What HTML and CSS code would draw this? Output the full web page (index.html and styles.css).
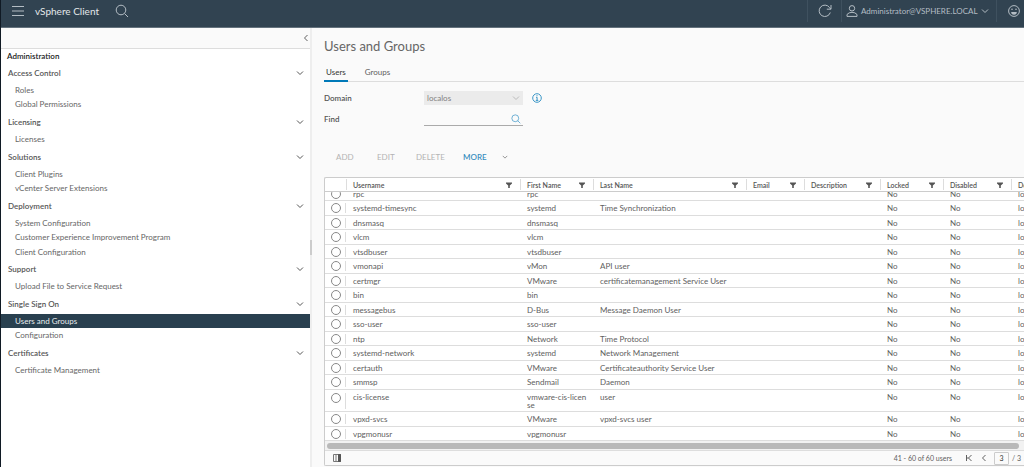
FILE: index.html
```html
<!DOCTYPE html>
<html lang="en">
<head>
<meta charset="utf-8">
<title>vSphere Client</title>
<link rel="stylesheet" href="styles.css">
</head>
<body>
<svg class="symbols" aria-hidden="true">
  <symbol id="chevron" viewBox="0 0 8 8"><path d="M1 2.500 4 5.500 7 2.500"/></symbol>
  <symbol id="chevron-left" viewBox="0 0 8 8"><path d="M5.500 1 2.500 4 5.500 7"/></symbol>
  <symbol id="search" viewBox="0 0 14 14"><circle cx="6" cy="6" r="4.800"/><path d="M9.500 9.500 13 13"/></symbol>
  <symbol id="filter" viewBox="0 0 6 6"><path d="M0 .5h6v1L3.800 3.500V6H2.200V3.500L0 1.500z"/></symbol>
</svg>
<header class="topbar">
  <button class="icon-button menu" aria-label="Menu"><svg class="icon" viewBox="0 0 12 12"><path d="M0 1.500h12M0 6h12M0 10.500h12"/></svg></button>
  <span class="brand">vSphere Client</span>
  <button class="icon-button" aria-label="Search"><svg class="icon icon-large"><use href="#search"/></svg></button>
  <div class="topbar-right">
    <button class="icon-button refresh" aria-label="Refresh"><svg class="icon icon-large" viewBox="0 0 14 14"><path d="M12.300 8.500A5.700 5.700 0 1 1 11.500 3.500L12.700 5M13 1v4.200H8.800"/></svg></button>
    <button class="account"><svg class="icon" viewBox="0 0 12 12"><circle cx="6" cy="3.300" r="2.700"/><path d="M1 11.400V9.500Q2.800 7.300 6 7.300T11 9.500v1.900z"/></svg><span>Administrator@VSPHERE.LOCAL</span><svg class="icon icon-small"><use href="#chevron"/></svg></button>
    <button class="icon-button smiley" aria-label="Feedback"><svg class="icon" viewBox="0 0 12 12"><circle cx="6" cy="6" r="5.400"/><path class="solid" d="M3.200 7h5.600A2.800 2.800 0 0 1 3.200 7z"/><circle class="solid" cx="4" cy="4.300" r=".8"/><circle class="solid" cx="8" cy="4.300" r=".8"/></svg></button>
  </div>
</header>
<div class="layout">
  <aside class="sidebar">
    <div class="sidebar-bar"><button class="icon-button" aria-label="Collapse"><svg class="icon icon-small"><use href="#chevron-left"/></svg></button></div>
    <nav class="nav">
      <h2 class="nav-title">Administration</h2>
      <button class="group">Access Control<svg class="icon icon-small"><use href="#chevron"/></svg></button>
      <ul><li><a href="#">Roles</a></li><li><a href="#">Global Permissions</a></li></ul>
      <button class="group">Licensing<svg class="icon icon-small"><use href="#chevron"/></svg></button>
      <ul><li><a href="#">Licenses</a></li></ul>
      <button class="group">Solutions<svg class="icon icon-small"><use href="#chevron"/></svg></button>
      <ul><li><a href="#">Client Plugins</a></li><li><a href="#">vCenter Server Extensions</a></li></ul>
      <button class="group">Deployment<svg class="icon icon-small"><use href="#chevron"/></svg></button>
      <ul><li><a href="#">System Configuration</a></li><li><a href="#">Customer Experience Improvement Program</a></li><li><a href="#">Client Configuration</a></li></ul>
      <button class="group">Support<svg class="icon icon-small"><use href="#chevron"/></svg></button>
      <ul><li><a href="#">Upload File to Service Request</a></li></ul>
      <button class="group">Single Sign On<svg class="icon icon-small"><use href="#chevron"/></svg></button>
      <ul><li class="selected"><a href="#" aria-current="page">Users and Groups</a></li><li><a href="#">Configuration</a></li></ul>
      <button class="group">Certificates<svg class="icon icon-small"><use href="#chevron"/></svg></button>
      <ul><li><a href="#">Certificate Management</a></li></ul>
    </nav>
  </aside>
  <div class="splitter"><span class="grip"></span></div>
  <main class="content">
    <h1>Users and Groups</h1>
    <div class="tabs" role="tablist"><button class="tab active" role="tab" aria-selected="true">Users</button><button class="tab" role="tab" aria-selected="false">Groups</button></div>
    <div class="field">
      <label for="domain">Domain</label>
      <span class="control"><select id="domain" disabled><option>localos</option></select><svg class="icon icon-small"><use href="#chevron"/></svg></span>
      <button class="icon-button info" aria-label="Information"><svg class="icon" viewBox="0 0 10 10"><circle cx="5" cy="5" r="4.300"/><path d="M4 4.300h1.100V7.300M3.800 7.400h2.500M5 2.200v1"/></svg></button>
    </div>
    <div class="field">
      <label for="find">Find</label>
      <span class="control"><input id="find" type="text"><svg class="icon find-icon"><use href="#search"/></svg></span>
    </div>
    <div class="actions">
      <button class="add" disabled>ADD</button><button class="edit" disabled>EDIT</button><button class="delete" disabled>DELETE</button><button class="more">MORE<svg class="icon"><use href="#chevron"/></svg></button>
    </div>
    <section class="datagrid">
      <div class="viewport">
        <table>
          <colgroup><col class="c-select"><col class="c-user"><col class="c-first"><col class="c-last"><col class="c-email"><col class="c-desc"><col class="c-locked"><col class="c-disabled"><col class="c-domain"></colgroup>
          <thead><tr><td></td><th>Username</th><th>First Name</th><th>Last Name</th><th>Email</th><th>Description</th><th>Locked</th><th>Disabled</th><th>Domain</th></tr></thead>
          <tbody></tbody>
        </table>
      </div>
      <div class="scrollbar"><div class="thumb"></div></div>
      <footer class="grid-footer">
        <button class="icon-button" aria-label="Columns"><svg class="columns-icon" viewBox="0 0 8 8"><path d="M.5.5h7v7h-7zM3 .5v7M5.500.5v7"/><path class="solid" d="M5.500.5h2v7h-2z"/></svg></button>
        <div class="pager">
          <span>41 - 60 of 60 users</span>
          <button class="icon-button first" aria-label="First page"><svg class="icon icon-small" viewBox="0 0 8 8"><path d="M1.500 1v6M6.500 1 3.500 4l3 3M2 4h1.500"/></svg></button>
          <button class="icon-button" aria-label="Previous page"><svg class="icon icon-small"><use href="#chevron-left"/></svg></button>
          <input type="text" value="3" aria-label="Page"><span class="total">/ 3</span>
        </div>
      </footer>
    </section>
  </main>
</div>
<script src="grid.js"></script>
</body>
</html>
```

FILE: styles.css
```css
* { box-sizing: border-box; }
body {
  margin: 0;
  height: 100vh;
  display: flex;
  flex-direction: column;
  overflow: hidden;
  border-left: 1px solid #101a24;
  background: #fafafa;
  color: #606060;
  font: 8px/10px Lato, "Open Sans", sans-serif;
}
button, input, select { margin: 0; padding: 0; border: 0; background: none; color: inherit; font: inherit; }
button { display: flex; align-items: center; }
ul { list-style: none; margin: 0; padding: 0; }
.symbols { position: absolute; width: 0; height: 0; }
.icon { width: 12px; height: 12px; fill: none; stroke: currentColor; stroke-width: 1; flex: none; }
.icon-large { width: 14px; height: 14px; }
.icon-small { width: 8px; height: 8px; }
.icon .solid { fill: currentColor; stroke: none; }

.topbar {
  flex: none;
  display: flex;
  align-items: center;
  height: 28px;
  padding: 0 0 6px 11px;
  background: #314351;
  border-bottom: 1px solid #64727d;
  color: #b4bdc4;
}
.brand { width: 63px; white-space: nowrap; margin: 0 17px 0 11px; font-size: 10px; color: #e4e8ea; }
.topbar-right { display: flex; align-items: center; height: 22px; margin-left: auto; }
.topbar-right button { height: 22px; border-left: 1px solid #3f515f; }
.refresh { width: 34px; justify-content: center; }
.account { width: 155px; padding-left: 4px; gap: 3px; }
.account .icon-small { margin-left: auto; margin-right: 11px; }
.smiley { width: 28px; padding-left: 11px; }

.layout { flex: 1; display: flex; min-height: 0; }
.sidebar { width: 309px; flex: none; background: #fff; }
.sidebar-bar { display: flex; justify-content: flex-end; align-items: center; height: 21px; background: #fafafa; border-bottom: 1px solid #ddd; }
.nav-title { margin: 0; padding: 2px 6px 0; height: 14px; font-size: 8px; line-height: 10px; font-weight: 600; color: #222; }
.group { width: 100%; height: 20px; padding: 0 6px 0 7px; justify-content: space-between; font-weight: 600; color: #565656; }
.nav li { height: 14px; line-height: 14px; }
.nav li:nth-child(even), .nav li:only-child { height: 15px; }
.nav a { display: block; height: 100%; padding-left: 14px; color: #666; text-decoration: none; }
.nav .selected { background: #29404f; }
.nav .selected a { color: #e8ecee; }
.splitter { flex: none; width: 2px; display: flex; align-items: center; background: #eee; }
.grip { width: 2px; height: 15px; background: #ccc; }

.content { flex: 1; min-width: 0; display: flex; flex-direction: column; padding: 9px 0 1px 12px; }
h1 { margin: 0; font-size: 13px; line-height: 18px; font-weight: 400; color: #666; }
.tabs { display: flex; gap: 15px; height: 18px; margin: 9px 0 9px; border-bottom: 1px solid #ddd; }
.tab { height: 18px; padding: 0 2px; border-bottom: 2px solid transparent; }
.tab.active { border-color: #0079b8; color: #333; }
.field { display: flex; align-items: center; height: 14px; margin-bottom: 7px; }
.field label { width: 100px; font-weight: 600; color: #565656; }
.control { display: flex; align-items: center; width: 99px; height: 14px; }
.control select, .control input { flex: 1; min-width: 0; height: 14px; }
.control select { appearance: none; padding: 0 3px; background: #ebebeb; color: #808080; opacity: 1; margin-right: -11px; }
.control .icon { margin-right: 3px; color: #bbb; z-index: 1; }
.control input { border-bottom: 1px solid #aaa; margin-right: -12px; outline: none; }
.control .find-icon { width: 10px; height: 10px; margin-right: 2px; color: #3b96c7; }
.info { margin-left: 9px; color: #3b96c7; }
.info .icon { width: 10px; height: 10px; }
.actions { display: flex; height: 16px; margin: 16px 0 12px 12px; font-weight: 400; color: #bbb; }
.actions button:disabled { color: #b4b4b4; }
.add { width: 41px; }
.edit { width: 39px; }
.delete { width: 47px; }
.actions .more { gap: 15px; font-weight: 600; color: #3b8fc0; }
.more .icon { width: 6px; height: 6px; color: #777; }

.datagrid { flex: 1; min-height: 0; display: flex; flex-direction: column; border: 1px solid #ccc; border-right: 0; border-radius: 2px 0 0 2px; background: #fff; overflow: hidden; }
.viewport { flex: 1; min-height: 0; overflow: hidden; }
table { width: 100%; min-width: 746px; table-layout: fixed; border-collapse: separate; border-spacing: 0; }
.c-select { width: 21px; }
.c-user { width: 174px; }
.c-first { width: 73px; }
.c-last { width: 153px; }
.c-email { width: 58px; }
.c-desc { width: 76px; }
.c-locked { width: 63px; }
.c-disabled { width: 68px; }
.c-domain { width: 60px; }
thead td, th { height: 14px; padding: 0; border-bottom: 1px solid #ccc; }
th { text-align: left; font-size: 7px; font-weight: 600; color: #565656; }
.heading { display: flex; align-items: center; justify-content: space-between; height: 11px; padding: 0 8px 0 6px; border-left: 1px solid #ddd; white-space: nowrap; }
.filter { width: 6px; height: 6px; fill: #555; }
tbody td { height: 14px; padding: 2px 6px 1px 7px; border-bottom: 1px solid #ddd; vertical-align: top; word-break: break-all; }
td:nth-child(4) { word-break: normal; }
tbody tr:nth-child(even) td { height: 15px; }
tbody td.cell-select { padding: 2px 0 1px 6px; }
.cell-select label { display: flex; height: 10px; border-right: 1px solid #ddd; }
.cell-select input { appearance: none; width: 10px; height: 10px; border: 1px solid #888; border-radius: 50%; background: #fff; }
tbody tr.clipped td { height: 9px; padding-top: 0; padding-bottom: 1px; }
.peek { display: flex; align-items: flex-end; height: 7px; overflow: hidden; }
.peek label { border: 0; }
tbody tr.wrapped td { height: 22px; line-height: 8px; padding: 3px 5px 2px 7px; }
tbody tr.wrapped td.cell-select { padding: 3px 0 2px 6px; }
.wrapped .cell-select label { height: 16px; }
.scrollbar { flex: none; height: 10px; padding: 2px 5px 1px 2px; background: #f2f2f2; border-bottom: 1px solid #ddd; }
.thumb { height: 6px; border-radius: 3px; background: #b9b9b9; }
.grid-footer { flex: none; display: flex; align-items: center; justify-content: space-between; height: 14px; padding: 0 3px 0 8px; background: #fafafa; }
.columns-icon { width: 8px; height: 8px; fill: none; stroke: #777; }
.columns-icon .solid { fill: #555; stroke: #555; }
.pager { display: flex; align-items: center; font-size: 7px; }
.first { margin: 0 7px 0 13px; }
.pager input { width: 15px; height: 13px; margin: 0 3px 0 6px; border: 1px solid #ccc; border-radius: 1px; text-align: center; color: #333; }
```

FILE: grid.js
```js
const users = [
  ["rpc", "rpc", ""],
  ["systemd-timesync", "systemd", "Time Synchronization"],
  ["dnsmasq", "dnsmasq", ""],
  ["vlcm", "vlcm", ""],
  ["vtsdbuser", "vtsdbuser", ""],
  ["vmonapi", "vMon", "API user"],
  ["certmgr", "VMware", "certificatemanagement Service User"],
  ["bin", "bin", ""],
  ["messagebus", "D-Bus", "Message Daemon User"],
  ["sso-user", "sso-user", ""],
  ["ntp", "Network", "Time Protocol"],
  ["systemd-network", "systemd", "Network Management"],
  ["certauth", "VMware", "Certificateauthority Service User"],
  ["smmsp", "Sendmail", "Daemon"],
  ["cis-license", "vmware-cis-license", "user"],
  ["vpxd-svcs", "VMware", "vpxd-svcs user"],
  ["vpgmonusr", "vpgmonusr", ""]
];

document.querySelectorAll("th").forEach((th) => {
  th.innerHTML = `<div class="heading"><span>${th.textContent}</span><button aria-label="Filter ${th.textContent}"><svg class="filter"><use href="#filter"/></svg></button></div>`;
});

document.querySelector("tbody").innerHTML = users.map(([user, first, last], i) => {
  const rowClass = i === 0 ? "clipped" : first.length > 15 ? "wrapped" : "";
  const wrap = (html) => (i === 0 ? `<div class="peek">${html}</div>` : html);
  const radio = `<label><input type="radio" name="user" aria-label="${user}"></label>`;
  const cells = [user, first, last, "", "", "No", "No", "localos"];
  return `<tr class="${rowClass}"><td class="cell-select">${wrap(radio)}</td>${cells.map((c) => `<td>${wrap(c)}</td>`).join("")}</tr>`;
}).join("");
```
